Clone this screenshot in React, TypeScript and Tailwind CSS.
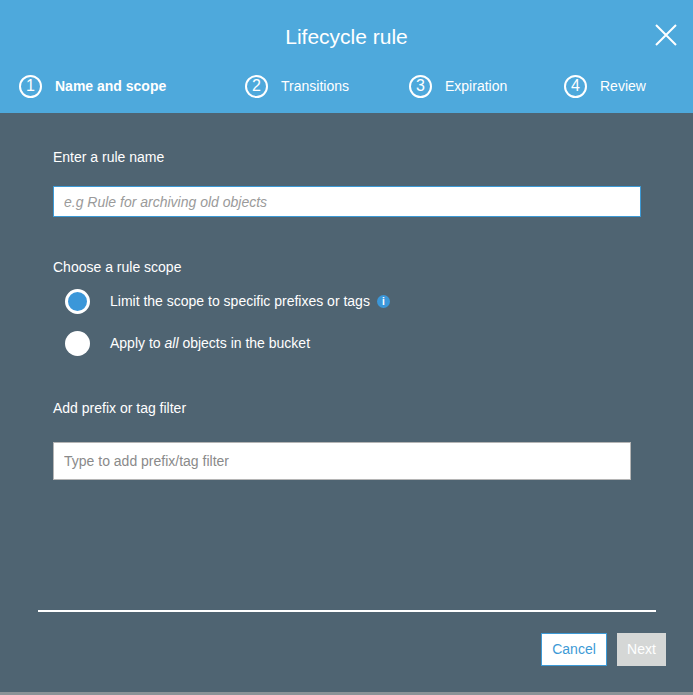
import React from 'react';

const steps = [
  { n: 1, label: 'Name and scope', w: 'w-[226px]', active: true },
  { n: 2, label: 'Transitions', w: 'w-[164px]' },
  { n: 3, label: 'Expiration', w: 'w-[155px]' },
  { n: 4, label: 'Review', w: '' },
];

export default function App() {
  return (
    <div className="w-[693px] h-[695px] bg-[#4f6472] flex flex-col text-white" style={{ fontFamily: '"Liberation Sans", Arial, sans-serif' }}>
      <div className="bg-[#4ea9dc] h-[113px] relative shrink-0">
        <div className="text-[21px] text-center pt-[21px]">Lifecycle rule</div>
        <svg className="absolute right-[16px] top-[24px]" width="22" height="22" viewBox="0 0 22 22">
          <path d="M1 1L21 21M21 1L1 21" stroke="white" strokeWidth="2" />
        </svg>
        <div className="flex items-center pl-[19px] mt-[22px]">
          {steps.map(s => (
            <div key={s.n} className={`flex items-center ${s.w}`}>
              <div className="w-[23px] h-[23px] rounded-full border-2 border-white flex items-center justify-center text-[16px] leading-none">{s.n}</div>
              <span className={`ml-[13px] text-[14px] ${s.active ? 'font-bold' : ''}`}>{s.label}</span>
            </div>
          ))}
        </div>
      </div>
      <div className="flex-1 relative px-[53px]">
        <div className="mt-[34px] text-[14px]">Enter a rule name</div>
        <input
          className="mt-[18px] w-[588px] h-[31px] bg-white border border-[#3d9ad6] px-[10px] text-[14px] italic text-gray-700 placeholder:text-[#9a9a9a] outline-none"
          placeholder="e.g Rule for archiving old objects"
        />
        <div className="mt-[40px] text-[14px]">Choose a rule scope</div>
        <div className="mt-[11px] flex flex-col gap-[17px] pl-[12px]">
          <div className="flex items-center">
            <div className="w-[25px] h-[25px] rounded-full bg-[#3b97d9] border-[3px] border-white" />
            <span className="ml-[20px] text-[14px]">Limit the scope to specific prefixes or tags</span>
            <span className="ml-[7px] w-[13px] h-[13px] rounded-full bg-[#3b97d9] text-white text-[10px] font-bold flex items-center justify-center">i</span>
          </div>
          <div className="flex items-center">
            <div className="w-[25px] h-[25px] rounded-full bg-white" />
            <span className="ml-[20px] text-[14px]">Apply to <i>all</i> objects in the bucket</span>
          </div>
        </div>
        <div className="mt-[42px] text-[14px]">Add prefix or tag filter</div>
        <input
          className="mt-[23px] w-[578px] h-[38px] bg-white border border-[#b5b5b5] px-[10px] text-[14px] text-gray-700 placeholder:text-[#8a8a8a] outline-none"
          placeholder="Type to add prefix/tag filter"
        />
        <div className="absolute left-[38px] top-[497px] w-[618px] h-[2px] bg-white" />
        <div className="absolute right-[27px] top-[520px] flex gap-[10px]">
          <button className="w-[66px] h-[33px] bg-white border border-[#3d9ad6] text-[#3d9ad6] text-[14px]">Cancel</button>
          <button className="w-[49px] h-[33px] bg-[#d5d7d6] text-white text-[14px]">Next</button>
        </div>
      </div>
      <div className="h-[3px] bg-[#8b9297] shrink-0" />
    </div>
  );
}
